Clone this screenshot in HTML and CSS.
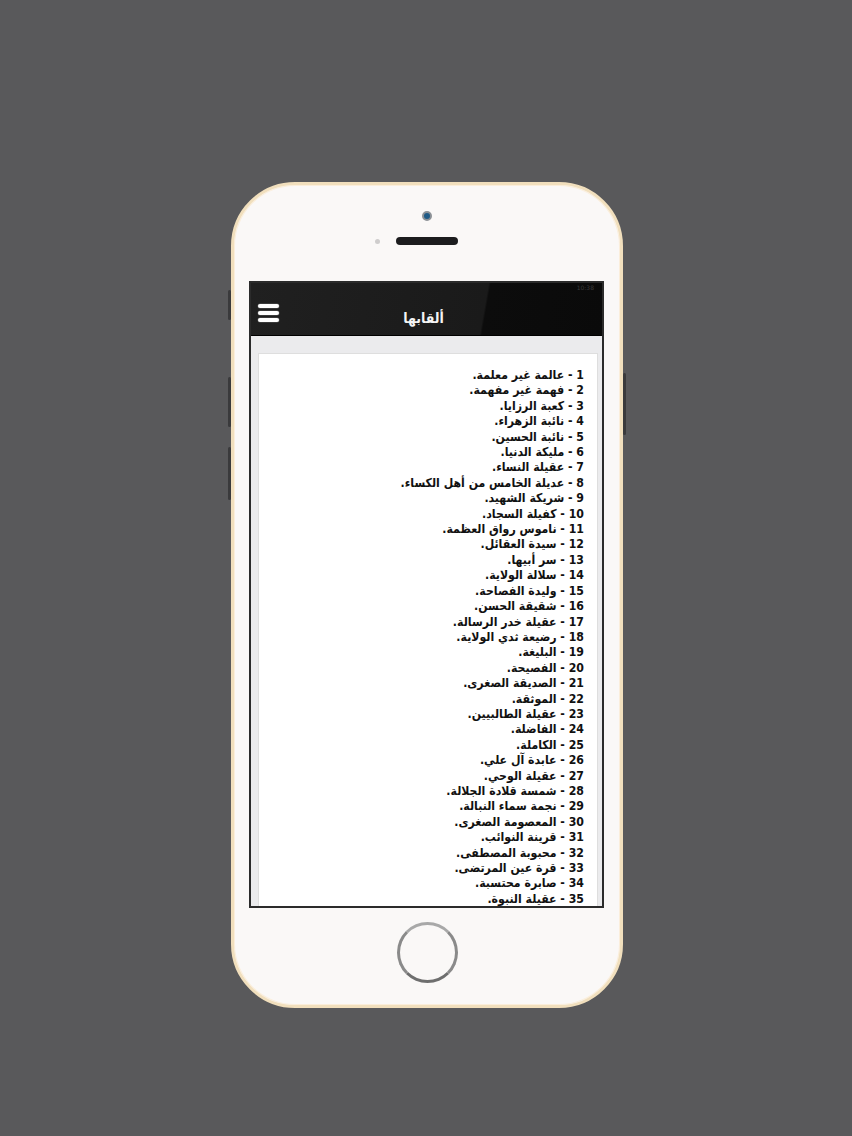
FILE: index.html
```html
<!DOCTYPE html>
<html lang="ar">
<head>
<meta charset="utf-8">
<title>ألقابها</title>
<link rel="stylesheet" href="styles.css">
</head>
<body>
<div class="stage">
  <div class="phone">
    <span class="btn btn-l1"></span>
    <span class="btn btn-l2"></span>
    <span class="btn btn-l3"></span>
    <span class="btn btn-r"></span>
    <div class="phone-top">
      <div class="camera"></div>
      <div class="speaker"><span class="sensor"></span></div>
    </div>
    <div class="screen">
      <div class="appbar">
        <div class="status">10:38</div>
        <div class="bar-row">
          <div class="menu"><span></span><span></span><span></span></div>
          <div class="title">ألقابها</div>
        </div>
      </div>
      <div class="content">
        <div class="card" dir="rtl">
          <p>1 - عالمة غير معلمة.</p>
          <p>2 - فهمة غير مفهمة.</p>
          <p>3 - كعبة الرزايا.</p>
          <p>4 - نائبة الزهراء.</p>
          <p>5 - نائبة الحسين.</p>
          <p>6 - مليكة الدنيا.</p>
          <p>7 - عقيلة النساء.</p>
          <p>8 - عديلة الخامس من أهل الكساء.</p>
          <p>9 - شريكة الشهيد.</p>
          <p>10 - كفيلة السجاد.</p>
          <p>11 - ناموس رواق العظمة.</p>
          <p>12 - سيدة العقائل.</p>
          <p>13 - سر أبيها.</p>
          <p>14 - سلالة الولاية.</p>
          <p>15 - وليدة الفصاحة.</p>
          <p>16 - شقيقة الحسن.</p>
          <p>17 - عقيلة خدر الرسالة.</p>
          <p>18 - رضيعة ثدي الولاية.</p>
          <p>19 - البليغة.</p>
          <p>20 - الفصيحة.</p>
          <p>21 - الصديقة الصغرى.</p>
          <p>22 - الموثقة.</p>
          <p>23 - عقيلة الطالبيين.</p>
          <p>24 - الفاضلة.</p>
          <p>25 - الكاملة.</p>
          <p>26 - عابدة آل علي.</p>
          <p>27 - عقيلة الوحي.</p>
          <p>28 - شمسة قلادة الجلالة.</p>
          <p>29 - نجمة سماء النبالة.</p>
          <p>30 - المعصومة الصغرى.</p>
          <p>31 - قرينة النوائب.</p>
          <p>32 - محبوبة المصطفى.</p>
          <p>33 - قرة عين المرتضى.</p>
          <p>34 - صابرة محتسبة.</p>
          <p>35 - عقيلة النبوة.</p>
        </div>
      </div>
    </div>
    <div class="phone-bottom">
      <div class="home"></div>
    </div>
  </div>
</div>
</body>
</html>
```

FILE: styles.css
```css
html, body {
  margin: 0;
  padding: 0;
  background: #59595b;
}
body {
  width: 852px;
  height: 1136px;
  overflow: hidden;
  font-family: "DejaVu Sans", "Noto Sans", sans-serif;
}
.stage {
  padding-top: 182px;
  padding-left: 231px;
}
.phone {
  position: relative;
  width: 386px;
  height: 820px;
  border: 3px solid #f1dfbd;
  border-radius: 64px;
  background: #faf8f7;
  box-shadow: inset 0 0 0 1px #fbeedb;
  display: flex;
  flex-direction: column;
}
.btn {
  position: absolute;
  width: 3px;
  background: #3a3a3c;
  border-radius: 2px;
}
.btn-l1 { left: -6px; top: 105px; height: 30px; }
.btn-l2 { left: -6px; top: 192px; height: 50px; }
.btn-l3 { left: -6px; top: 262px; height: 53px; }
.btn-r { right: -6px; top: 188px; height: 62px; }

.phone-top {
  height: 96px;
  display: flex;
  flex-direction: column;
  align-items: center;
}
.camera {
  margin-top: 26px;
  width: 6px;
  height: 6px;
  border-radius: 50%;
  background: #1f5a86;
  border: 2px solid #8c9196;
}
.speaker {
  position: relative;
  margin-top: 16px;
  width: 62px;
  height: 8px;
  border-radius: 5px;
  background: #1c1c1e;
}
.sensor {
  position: absolute;
  left: -21px;
  top: 1.5px;
  width: 5px;
  height: 5px;
  border-radius: 50%;
  background: #cfcdcd;
}

.screen {
  margin: 0 0 0 15px;
  width: 351px;
  height: 623px;
  border: 2px solid #2b2b2b;
  background: #ebebed;
  display: flex;
  flex-direction: column;
  overflow: hidden;
}
.appbar {
  height: 52px;
  background: linear-gradient(100deg, #202020 0%, #1a1a1a 66%, #0c0c0c 66.6%, #0a0a0a 100%);
  border-bottom: 1px solid #000;
  color: #fff;
  display: flex;
  flex-direction: column;
}
.status {
  height: 10px;
  font-size: 6px;
  line-height: 10px;
  color: #3a3a3a;
  text-align: right;
  padding-right: 8px;
}
.bar-row {
  flex: 1;
  display: flex;
  align-items: center;
  position: relative;
  padding-left: 7px;
  padding-bottom: 2px;
}
.menu {
  display: flex;
  flex-direction: column;
  gap: 3px;
}
.menu span {
  display: block;
  width: 21px;
  height: 4px;
  border-radius: 2px;
  background: #fff;
  box-shadow: 0 0 0 0.5px #555;
}
.title {
  position: absolute;
  left: 0;
  right: 0;
  top: 17px;
  text-align: center;
  font-size: 14px;
  font-family: "DejaVu Sans Condensed", "DejaVu Sans", sans-serif;
  font-weight: bold;
  padding-right: 6px;
  color: #f4f4f4;
}
.content {
  flex: 1;
  padding: 17px 4px 0 7px;
  overflow: hidden;
}
.card {
  background: #fff;
  border: 1px solid #dedede;
  border-bottom: none;
  height: 100%;
  padding: 14px 13px 0 0;
  box-sizing: border-box;
  text-align: right;
  color: #111;
}
.card p {
  margin: 0;
  font-family: "DejaVu Sans Condensed", "DejaVu Sans", sans-serif;
  font-stretch: semi-condensed;
  font-size: 12.2px;
  line-height: 15.4px;
  font-weight: bold;
  white-space: nowrap;
}

.phone-bottom {
  flex: 1;
  display: flex;
  justify-content: center;
  align-items: flex-start;
}
.home {
  margin-top: 14px;
  width: 55px;
  height: 55px;
  border-radius: 50%;
  border: 3px solid #8a8a8a;
  border-top-color: #a8a8a8;
  border-bottom-color: #6e6e6e;
  background: #faf8f7;
}
```
